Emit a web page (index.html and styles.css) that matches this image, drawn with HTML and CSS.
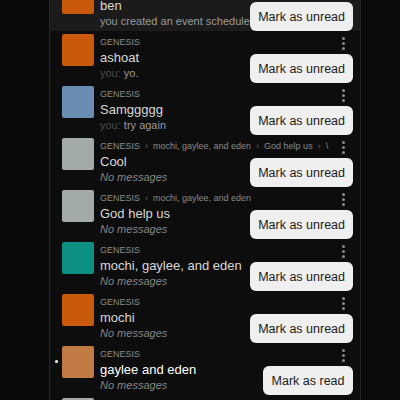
FILE: index.html
```html
<!DOCTYPE html>
<html lang="en">
<head>
    <meta charset="UTF-8">
    <title>Chats</title>
    <link rel="stylesheet" href="styles.css">
</head>
<body>
    <div class="sidebar"></div>

    <div class="threadList">
        <div class="threads">
            <div class="thread active">
                <div class="avatar orange"></div>
                <div class="info">
                    <div class="community">GENESIS</div>
                    <div class="title">ben</div>
                    <div class="preview">you created an event scheduled for tomorrow</div>
                </div>
                <div class="menuButton"><span></span><span></span><span></span></div>
                <button class="menuItem">Mark as unread</button>
            </div>

            <div class="thread">
                <div class="avatar orange"></div>
                <div class="info">
                    <div class="community">GENESIS</div>
                    <div class="title">ashoat</div>
                    <div class="preview"><span class="you">you:</span> yo.</div>
                </div>
                <div class="menuButton"><span></span><span></span><span></span></div>
                <button class="menuItem">Mark as unread</button>
            </div>

            <div class="thread">
                <div class="avatar blue"></div>
                <div class="info">
                    <div class="community">GENESIS</div>
                    <div class="title">Samggggg</div>
                    <div class="preview"><span class="you">you:</span> try again</div>
                </div>
                <div class="menuButton"><span></span><span></span><span></span></div>
                <button class="menuItem">Mark as unread</button>
            </div>

            <div class="thread">
                <div class="avatar grey"></div>
                <div class="info">
                    <div class="community">GENESIS<span class="sep">›</span>mochi, gaylee, and eden<span class="sep">›</span>God help us<span class="sep">›</span>\</div>
                    <div class="title">Cool</div>
                    <div class="preview empty">No messages</div>
                </div>
                <div class="menuButton"><span></span><span></span><span></span></div>
                <button class="menuItem">Mark as unread</button>
            </div>

            <div class="thread">
                <div class="avatar grey"></div>
                <div class="info">
                    <div class="community">GENESIS<span class="sep">›</span>mochi, gaylee, and eden</div>
                    <div class="title">God help us</div>
                    <div class="preview empty">No messages</div>
                </div>
                <div class="menuButton"><span></span><span></span><span></span></div>
                <button class="menuItem">Mark as unread</button>
            </div>

            <div class="thread">
                <div class="avatar teal"></div>
                <div class="info">
                    <div class="community">GENESIS</div>
                    <div class="title">mochi, gaylee, and eden</div>
                    <div class="preview empty">No messages</div>
                </div>
                <div class="menuButton"><span></span><span></span><span></span></div>
                <button class="menuItem">Mark as unread</button>
            </div>

            <div class="thread">
                <div class="avatar orange"></div>
                <div class="info">
                    <div class="community">GENESIS</div>
                    <div class="title">mochi</div>
                    <div class="preview empty">No messages</div>
                </div>
                <div class="menuButton"><span></span><span></span><span></span></div>
                <button class="menuItem">Mark as unread</button>
            </div>

            <div class="thread unread">
                <div class="unreadDot"></div>
                <div class="avatar tan"></div>
                <div class="info">
                    <div class="community">GENESIS</div>
                    <div class="title">gaylee and eden</div>
                    <div class="preview empty">No messages</div>
                </div>
                <div class="menuButton"><span></span><span></span><span></span></div>
                <button class="menuItem short">Mark as read</button>
            </div>

            <div class="thread">
                <div class="avatar grey"></div>
                <div class="info">
                    <div class="community">GENESIS</div>
                    <div class="title">eden</div>
                    <div class="preview empty">No messages</div>
                </div>
            </div>
        </div>
    </div>

    <div class="chatPane"></div>
</body>
</html>
```

FILE: styles.css
```css
body {
    margin: 0;
    height: 100vh;
    display: flex;
    background-color: #0b0b0b;
    font-family: "Liberation Sans", Arial, sans-serif;
    overflow: hidden;
}

.sidebar {
    width: 49px;
    flex-shrink: 0;
    background-color: #0a0a0a;
    border-right: 1px solid #262626;
}

.threadList {
    width: 310px;
    flex-shrink: 0;
    background-color: #0d0d0d;
    border-right: 1px solid #222;
    overflow: hidden;
}

.threads {
    margin-top: -21px;
}

.chatPane {
    flex: 1;
    background-color: #0b0b0b;
}

.thread {
    position: relative;
    height: 52px;
    box-sizing: border-box;
    padding: 3px 0 0 12px;
    display: flex;
    align-items: flex-start;
    gap: 6px;
}

.thread.active {
    background-color: #1b1b1b;
}

.avatar {
    width: 32px;
    height: 32px;
    border-radius: 2px;
    flex-shrink: 0;
}

.orange { background-color: #c9590b; }
.blue { background-color: #6a8db3; }
.grey { background-color: #a2aba8; }
.teal { background-color: #0d9082; }
.tan { background-color: #c17a44; }

.info {
    width: 235px;
    margin-top: 2px;
    overflow: hidden;
    white-space: nowrap;
}

.community {
    font-size: 9px;
    line-height: 12px;
    color: #8a8a8a;
}

.sep {
    margin: 0 5px;
    color: #6a6a6a;
}

.title {
    font-size: 13px;
    line-height: 19px;
    color: #d8d8d8;
}

.unread .title {
    color: #fff;
}

.preview {
    font-size: 11px;
    line-height: 13px;
    color: #9a9a9a;
}

.preview.empty {
    font-style: italic;
    color: #858585;
}

.you {
    color: #4a4a4a;
}

.unreadDot {
    position: absolute;
    left: 5px;
    top: 17px;
    width: 3px;
    height: 3px;
    border-radius: 50%;
    background-color: #fff;
}

.menuButton {
    position: absolute;
    right: 15px;
    top: 6px;
    display: flex;
    flex-direction: column;
    gap: 2px;
}

.menuButton span {
    width: 3px;
    height: 3px;
    border-radius: 50%;
    background-color: #8a8a8a;
}

.menuItem {
    position: absolute;
    right: 7px;
    top: 23px;
    height: 29px;
    padding: 0 8px;
    border: none;
    border-radius: 6px;
    background-color: #efefef;
    color: #1a1a1a;
    font-family: "Liberation Sans", Arial, sans-serif;
    font-size: 12.5px;
    z-index: 1;
}

.menuItem.short {
    padding: 0 8.5px;
}
```
